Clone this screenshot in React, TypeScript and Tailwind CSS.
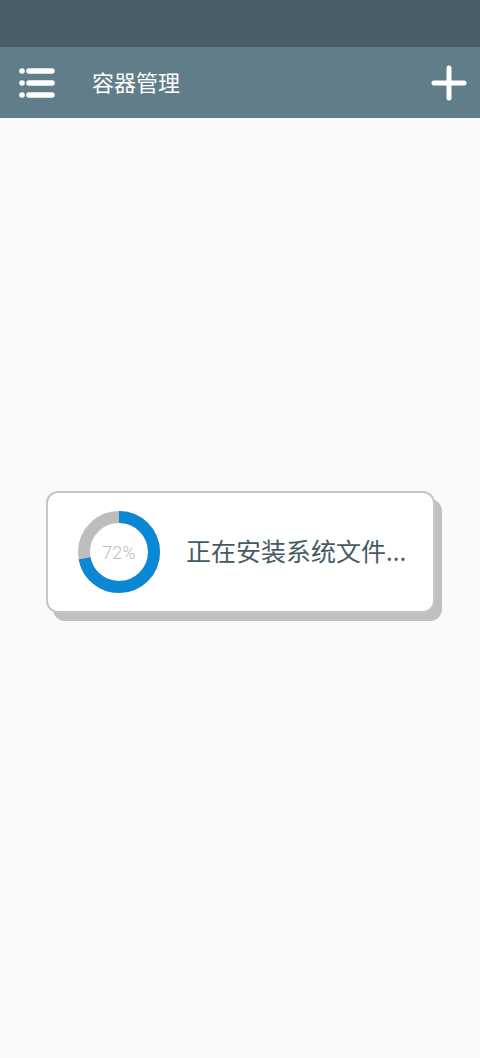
import React from 'react';

/* ------------------------------------------------------------------ */
/*  Icons                                                              */
/* ------------------------------------------------------------------ */

function MenuIcon() {
  return (
    <svg width="36" height="32" viewBox="0 0 36 32" fill="none">
      {[4, 16, 28].map((y) => (
        <g key={y}>
          <circle cx="3" cy={y} r="2.8" fill="#fff" />
          <line x1="10" y1={y} x2="33" y2={y} stroke="#fff" strokeWidth="5.5" strokeLinecap="round" />
        </g>
      ))}
    </svg>
  );
}

function PlusIcon() {
  return (
    <svg width="36" height="36" viewBox="0 0 36 36" fill="none">
      <line x1="18" y1="3" x2="18" y2="33" stroke="#fff" strokeWidth="5" strokeLinecap="round" />
      <line x1="3" y1="18" x2="33" y2="18" stroke="#fff" strokeWidth="5" strokeLinecap="round" />
    </svg>
  );
}

function ProgressRing({ percent }: { percent: number }) {
  const r = 35;
  const c = 2 * Math.PI * r;
  return (
    <div className="relative h-[82px] w-[82px] shrink-0">
      <svg width="82" height="82" viewBox="0 0 82 82" className="-rotate-90">
        <circle cx="41" cy="41" r={r} stroke="#bdbdbd" strokeWidth="12" fill="none" />
        <circle
          cx="41"
          cy="41"
          r={r}
          stroke="#0a88d6"
          strokeWidth="12"
          fill="none"
          strokeDasharray={`${(c * percent) / 100} ${c}`}
        />
      </svg>
      <span
        className="absolute inset-0 flex items-center justify-center text-[18px] font-light text-[#bdbdbd]"
        style={{ fontFamily: 'Roboto, sans-serif' }}
      >
        {percent}%
      </span>
    </div>
  );
}

/* ------------------------------------------------------------------ */
/*  Page                                                               */
/* ------------------------------------------------------------------ */

export default function App() {
  return (
    <div
      className="flex h-[1058px] w-[480px] flex-col bg-[#fafafa]"
      style={{ fontFamily: '"Noto Sans", "Noto Sans CJK SC", sans-serif' }}
    >
      {/* Status bar */}
      <div className="h-[47px] shrink-0 bg-[#4a5d67]" />

      {/* Header */}
      <div className="flex h-[71px] shrink-0 items-center bg-[#617d8a] pl-[19px] pr-[13px]">
        <MenuIcon />
        <span className="ml-[37px] text-[22px] text-white">容器管理</span>
        <div className="ml-auto">
          <PlusIcon />
        </div>
      </div>

      {/* Installing dialog */}
      <div className="pl-[46px] pt-[373px]">
        <div className="flex h-[122px] w-[389px] items-center rounded-[12px] border-2 border-[#c6c6c6] bg-white pl-[30px] shadow-[7px_8px_0_#c0c0c0]">
          <ProgressRing percent={72} />
          <span className="ml-[26px] text-[25px] text-[#455a64]">正在安装系统文件...</span>
        </div>
      </div>
    </div>
  );
}
